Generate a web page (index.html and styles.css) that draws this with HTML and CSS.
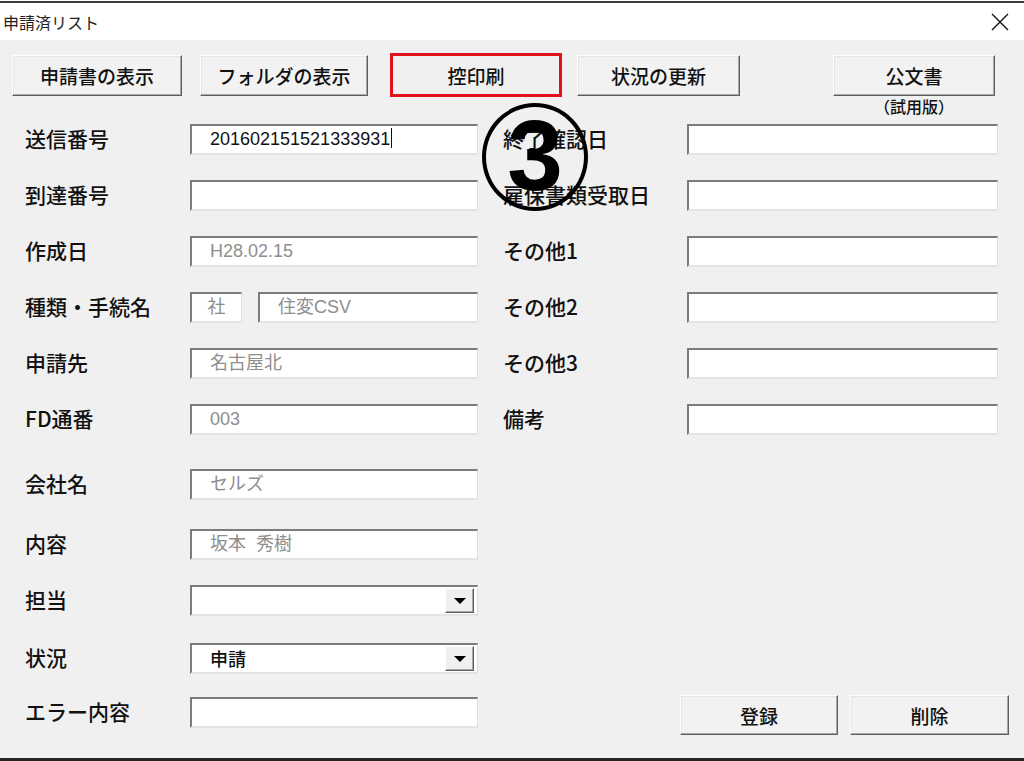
FILE: index.html
```html
<!DOCTYPE html>
<html lang="ja">
<head>
  <meta charset="UTF-8" />
  <title>申請済リスト</title>
  <link rel="stylesheet" href="styles.css">
</head>
<body>
  <div class="window">
    <div class="titlebar">
      <span class="title">申請済リスト</span>
      <svg class="close" width="18" height="18" viewBox="0 0 18 18">
        <path d="M1 1 L17 17 M17 1 L1 17" stroke="#111" stroke-width="1.4" fill="none" />
      </svg>
    </div>

    <div class="content">
      <div class="toolbar">
        <button class="btn btn-app">申請書の表示</button>
        <button class="btn btn-folder">フォルダの表示</button>
        <button class="btn btn-print">控印刷</button>
        <button class="btn btn-update">状況の更新</button>
        <div class="btn-wrap">
          <button class="btn btn-doc">公文書</button>
          <div class="caption">（試用版）</div>
        </div>
      </div>

      <div class="form">
        <div class="col-left">
          <div class="row">
            <label class="label">送信番号</label>
            <div class="field">201602151521333931<span class="caret"></span></div>
          </div>
          <div class="row">
            <label class="label">到達番号</label>
            <div class="field"></div>
          </div>
          <div class="row">
            <label class="label">作成日</label>
            <div class="field disabled">H28.02.15</div>
          </div>
          <div class="row">
            <label class="label">種類・手続名</label>
            <div class="field disabled field-kind">社</div>
            <div class="field disabled field-proc">住変CSV</div>
          </div>
          <div class="row">
            <label class="label">申請先</label>
            <div class="field disabled">名古屋北</div>
          </div>
          <div class="row">
            <label class="label">FD通番</label>
            <div class="field disabled">003</div>
          </div>
          <div class="row row-company">
            <label class="label">会社名</label>
            <div class="field disabled">セルズ</div>
          </div>
          <div class="row row-content">
            <label class="label">内容</label>
            <div class="field disabled">坂本&nbsp;&nbsp;秀樹</div>
          </div>
          <div class="row">
            <label class="label">担当</label>
            <div class="field select">
              <span class="select-value"></span>
              <span class="drop"><span class="arrow"></span></span>
            </div>
          </div>
          <div class="row row-status">
            <label class="label">状況</label>
            <div class="field select">
              <span class="select-value">申請</span>
              <span class="drop"><span class="arrow"></span></span>
            </div>
          </div>
          <div class="row row-error">
            <label class="label">エラー内容</label>
            <div class="field"></div>
          </div>
        </div>

        <div class="col-right">
          <div class="row">
            <label class="label label-wide">終了確認日</label>
            <div class="field field-wide"></div>
          </div>
          <div class="row">
            <label class="label label-wide">雇保書類受取日</label>
            <div class="field field-wide"></div>
          </div>
          <div class="row">
            <label class="label label-wide">その他1</label>
            <div class="field field-wide"></div>
          </div>
          <div class="row">
            <label class="label label-wide">その他2</label>
            <div class="field field-wide"></div>
          </div>
          <div class="row">
            <label class="label label-wide">その他3</label>
            <div class="field field-wide"></div>
          </div>
          <div class="row">
            <label class="label label-wide">備考</label>
            <div class="field field-wide"></div>
          </div>

          <div class="actions">
            <button class="btn btn-save">登録</button>
            <button class="btn btn-delete">削除</button>
          </div>
        </div>
      </div>

      <!-- 注釈の丸数字 -->
      <div class="step-mark">3</div>
    </div>
  </div>
</body>
</html>
```

FILE: styles.css
```css
body {
  margin: 0;
  padding: 0;
  background: #fff;
  font-family: "Noto Sans CJK JP", sans-serif;
  color: #111;
}

.window {
  width: 1024px;
  height: 761px;
  box-sizing: border-box;
  margin-top: 1px;
  border-top: 2px solid #3a3a3a;
  border-bottom: 4px solid #262626;
  display: flex;
  flex-direction: column;
  overflow: hidden;
}

.titlebar {
  height: 37px;
  background: #fff;
  display: flex;
  align-items: center;
  justify-content: space-between;
  padding: 0 15px 0 3px;
}

.title {
  font-size: 16px;
  color: #222;
}

.close {
  display: block;
}

.content {
  flex: 1;
  position: relative;
  background: #f0f0f0;
}

/* ボタン */
.toolbar {
  height: 84px;
  box-sizing: border-box;
  padding: 15px 0 0 12px;
  display: flex;
  align-items: flex-start;
}

.btn {
  height: 41px;
  box-sizing: border-box;
  background: #f2f2f2;
  border: 1px solid;
  border-color: #fdfdfd #5e5e5e #5e5e5e #fdfdfd;
  box-shadow: inset -1px -1px 0 #a8a8a8, inset 1px 1px 0 #e6e6e6;
  font-family: "Noto Sans CJK JP", sans-serif;
  font-size: 19px;
  font-weight: 500;
  color: #111;
  padding: 0;
  cursor: pointer;
}

.btn-app { width: 170px; }
.btn-folder { width: 168px; margin-left: 18px; }

.btn-print {
  width: 172px;
  height: 44px;
  margin-left: 22px;
  margin-top: -2px;
  border: 3px solid #e0121b;
  box-shadow: none;
  background: #f0f0f0;
}

.btn-update { width: 163px; margin-left: 15px; }

.btn-wrap {
  margin-left: 93px;
  width: 162px;
}

.btn-doc { width: 162px; }

.caption {
  text-align: center;
  font-size: 16px;
  font-weight: 500;
  line-height: 20px;
  margin-top: 0;
}

/* フォーム */
.form {
  display: flex;
  padding-left: 25px;
  gap: 25px;
}

.col-left { width: 453px; }
.col-right { width: 506px; }

.row {
  display: flex;
  align-items: center;
  height: 31px;
}

.row + .row { margin-top: 25px; }
.row-company.row { margin-top: 34px; }
.row-content.row { margin-top: 29px; }
.row-status.row { margin-top: 27px; }
.row-error.row { margin-top: 23px; }

.label {
  width: 165px;
  flex-shrink: 0;
  font-size: 21px;
  font-weight: 500;
  line-height: 28px;
  margin-top: -3px;
  color: #111;
}

.label-wide { width: 184px; }

.field {
  width: 288px;
  height: 31px;
  box-sizing: border-box;
  background: #fff;
  border-top: 2px solid #7c7c7c;
  border-left: 2px solid #7c7c7c;
  border-right: 1px solid #dedede;
  border-bottom: 2px solid #e4e4e4;
  padding-left: 18px;
  font-family: "Liberation Sans", "Noto Sans CJK JP", sans-serif;
  font-size: 18px;
  line-height: 27px;
  color: #111;
  white-space: nowrap;
}

.field.disabled { color: #8e8e8e; }

.field-wide { width: 311px; }

.field-kind {
  width: 52px;
  padding-left: 0;
  text-align: center;
  margin-right: 16px;
}

.field-proc { width: 220px; }

.caret {
  display: inline-block;
  width: 1px;
  height: 20px;
  background: #111;
  vertical-align: -3px;
  margin-left: 1px;
}

.select {
  display: flex;
  align-items: center;
  padding-right: 3px;
}

.select-value {
  flex: 1;
  font-family: "Noto Sans CJK JP", sans-serif;
  font-size: 18px;
  font-weight: 500;
}

.drop {
  width: 29px;
  height: 25px;
  box-sizing: border-box;
  background: #f0f0f0;
  border: 1px solid;
  border-color: #fdfdfd #5e5e5e #5e5e5e #fdfdfd;
  box-shadow: inset -1px -1px 0 #a8a8a8;
  display: flex;
  align-items: center;
  justify-content: center;
}

.arrow {
  width: 0;
  height: 0;
  border-left: 6px solid transparent;
  border-right: 6px solid transparent;
  border-top: 6px solid #000;
}

.actions {
  display: flex;
  gap: 12px;
  margin-top: 260px;
  padding-left: 177px;
}

.actions .btn {
  height: 40px;
  width: 158px;
}

.actions .btn-delete { width: 159px; }

.step-mark {
  position: absolute;
  left: 482px;
  top: 63px;
  width: 106px;
  height: 108px;
  box-sizing: border-box;
  border: 4px solid #000;
  border-radius: 50%;
  display: flex;
  align-items: center;
  justify-content: center;
  padding-bottom: 4px;
  font-family: "Liberation Sans", sans-serif;
  font-weight: bold;
  font-size: 100px;
  line-height: 1;
  color: #000;
}
```
